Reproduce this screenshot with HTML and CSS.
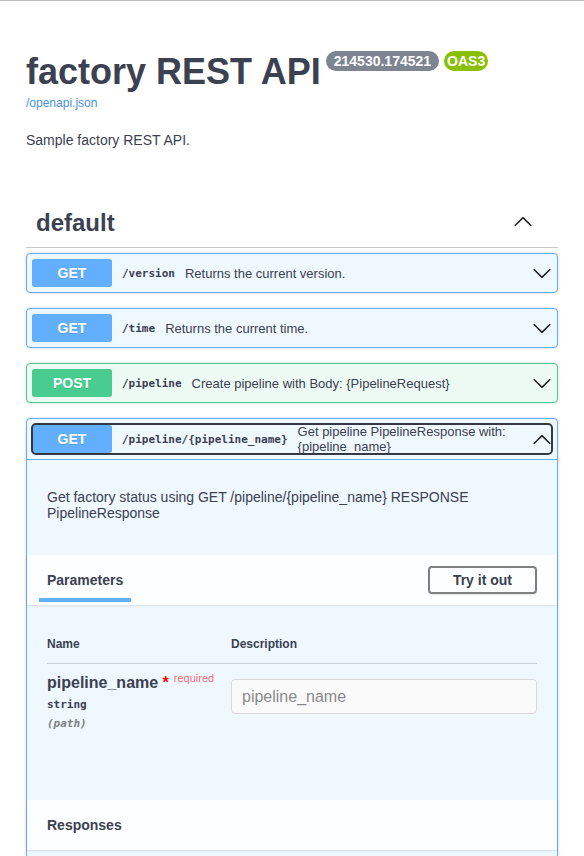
FILE: index.html
```html
<!DOCTYPE html>
<html lang="en">
<head>
<meta charset="utf-8">
<title>factory REST API</title>
<link rel="stylesheet" href="styles.css">
</head>
<body>
<div class="topline"></div>
<div class="wrapper">
  <section class="info">
    <h2 class="title"><span class="title-text">factory REST API</span><span class="badge badge-version">214530.174521</span><span class="badge badge-oas">OAS3</span></h2>
    <a class="spec-link" href="#">/openapi.json</a>
    <p class="info-desc">Sample factory REST API.</p>
  </section>

  <section class="tag-section">
    <div class="tag">
      <h3 class="tag-name">default</h3>
      <svg class="arrow tag-arrow" viewBox="0 0 20 20" width="20" height="20"><path d="M17.418 14.908c.272.268.709.268.979 0s.271-.701 0-.969l-7.908-7.83c-.27-.268-.707-.268-.979 0l-7.908 7.83c-.27.268-.27.701 0 .969.271.268.709.268.979 0L10 7.767l7.418 7.141z"/></svg>
    </div>

    <div class="opblock opblock-get">
      <div class="summary">
        <span class="method method-get">GET</span>
        <span class="path">/version</span>
        <span class="desc">Returns the current version.</span>
        <svg class="arrow" viewBox="0 0 20 20" width="20" height="20"><path d="M17.418 6.109c.272-.268.709-.268.979 0s.271.701 0 .969l-7.908 7.83c-.27.268-.707.268-.979 0l-7.908-7.830c-.27-.268-.27-.701 0-.969.271-.268.709-.268.979 0L10 13.25l7.418-7.141z"/></svg>
      </div>
    </div>

    <div class="opblock opblock-get">
      <div class="summary">
        <span class="method method-get">GET</span>
        <span class="path">/time</span>
        <span class="desc">Returns the current time.</span>
        <svg class="arrow" viewBox="0 0 20 20" width="20" height="20"><path d="M17.418 6.109c.272-.268.709-.268.979 0s.271.701 0 .969l-7.908 7.83c-.27.268-.707.268-.979 0l-7.908-7.83c-.27-.268-.27-.701 0-.969.271-.268.709-.268.979 0L10 13.25l7.418-7.141z"/></svg>
      </div>
    </div>

    <div class="opblock opblock-post">
      <div class="summary">
        <span class="method method-post">POST</span>
        <span class="path">/pipeline</span>
        <span class="desc">Create pipeline with Body: {PipelineRequest}</span>
        <svg class="arrow" viewBox="0 0 20 20" width="20" height="20"><path d="M17.418 6.109c.272-.268.709-.268.979 0s.271.701 0 .969l-7.908 7.83c-.27.268-.707.268-.979 0l-7.908-7.83c-.27-.268-.27-.701 0-.969.271-.268.709-.268.979 0L10 13.25l7.418-7.141z"/></svg>
      </div>
    </div>

    <div class="opblock opblock-get is-open">
      <div class="summary summary-open">
        <div class="summary-control">
          <span class="method method-get">GET</span>
          <span class="path">/pipeline/{pipeline_name}</span>
          <span class="desc desc-wrap">Get pipeline PipelineResponse with: {pipeline_name}</span>
          <svg class="arrow" viewBox="0 0 20 20" width="20" height="20"><path d="M17.418 14.908c.272.268.709.268.979 0s.271-.701 0-.969l-7.908-7.83c-.27-.268-.707-.268-.979 0l-7.908 7.83c-.27.268-.27.701 0 .969.271.268.709.268.979 0L10 7.767l7.418 7.141z"/></svg>
        </div>
      </div>
      <div class="opblock-body">
        <div class="op-desc"><p>Get factory status using GET /pipeline/{pipeline_name} RESPONSE PipelineResponse</p></div>

        <div class="section-header">
          <h4 class="tab-title">Parameters</h4>
          <button class="try-out" type="button">Try it out</button>
        </div>

        <div class="table-container">
          <div class="params-head">
            <span class="col-name">Name</span>
            <span class="col-desc">Description</span>
          </div>
          <div class="param-row">
            <div class="col-name">
              <div class="param-name">pipeline_name<span class="req-star">&nbsp;*</span><span class="req-label">required</span></div>
              <div class="param-type">string</div>
              <div class="param-in">(path)</div>
            </div>
            <div class="col-desc">
              <input class="param-input" type="text" placeholder="pipeline_name">
            </div>
          </div>
        </div>

        <div class="section-header">
          <h4 class="section-title">Responses</h4>
        </div>
        <div class="responses-body"></div>
      </div>
    </div>
  </section>
</div>
</body>
</html>
```

FILE: styles.css
```css
* { box-sizing: border-box; }

html {
  overflow: hidden;
}

html, body {
  margin: 0;
  padding: 0;
  background: #fff;
}

body {
  font-family: "Liberation Sans", Arial, sans-serif;
  color: #3b4151;
}

.topline {
  height: 1px;
  background: #bdbdbd;
}

.wrapper {
  padding: 0 26px;
}

/* ---------- info ---------- */
.info {
  padding-top: 50px;
}

.title {
  margin: 0;
  display: flex;
  align-items: flex-start;
  font-size: 36px;
  font-weight: 700;
  line-height: 42px;
  color: #3b4151;
}

.badge {
  margin-left: 5px;
  height: 20px;
  line-height: 20px;
  border-radius: 57px;
  color: #fff;
  font-size: 14px;
  font-weight: 700;
  padding: 0 8px;
}

.badge-version {
  background: #7d8492;
}

.badge-oas {
  background: #89bf04;
  padding: 0 3px;
}

.spec-link {
  display: block;
  margin-top: 3px;
  font-size: 12px;
  line-height: 14px;
  color: #4990e2;
  text-decoration: none;
}

.info-desc {
  margin: 22px 0 0;
  font-size: 14px;
  line-height: 16px;
}

/* ---------- tag ---------- */
.tag-section {
  margin-top: 50px;
}

.tag {
  display: flex;
  align-items: center;
  justify-content: space-between;
  padding: 10px 25px 10px 10px;
  border-bottom: 1px solid rgba(59, 65, 81, .3);
  margin-bottom: 5px;
}

.tag-name {
  margin: 0;
  font-size: 24px;
  font-weight: 700;
  line-height: 29px;
}

.arrow {
  flex: none;
  width: 20px;
  height: 20px;
  fill: #1a1a1a;
}

.tag-arrow {
  margin-top: -4px;
}

/* ---------- operation blocks ---------- */
.opblock {
  border: 1px solid #61affe;
  background: #eff7ff;
  border-radius: 4px;
  margin-bottom: 15px;
  box-shadow: 0 0 3px rgba(0, 0, 0, .19);
}

.opblock-post {
  border-color: #49cc90;
  background: #edfaf4;
}

.summary {
  display: flex;
  align-items: center;
  padding: 5px;
}

.summary-open {
  border-bottom: 1px solid #61affe;
}

.summary-control {
  flex: 1;
  display: flex;
  align-items: center;
  border-radius: 4px;
  outline: 2px solid #343846;
  outline-offset: -1px;
}

.method {
  flex: none;
  width: 80px;
  padding: 6px 0;
  line-height: 16px;
  font-size: 14px;
  font-weight: 700;
  color: #fff;
  text-align: center;
  border-radius: 3px;
  text-shadow: 0 1px 0 rgba(0, 0, 0, .1);
}

.method-get { background: #61affe; }
.method-post { background: #49cc90; }

.path {
  flex: none;
  padding: 0 10px;
  font-family: "DejaVu Sans Mono", "Liberation Mono", monospace;
  font-size: 11px;
  font-weight: 700;
  color: #3b4151;
}

.desc {
  flex: 1;
  font-size: 13px;
  color: #3b4151;
}

.desc-wrap {
  line-height: 15px;
}

/* ---------- open block body ---------- */
.op-desc {
  padding: 29px 20px 34px;
  font-size: 14px;
  line-height: 16px;
}

.op-desc p {
  margin: 0;
}

.section-header {
  display: flex;
  align-items: center;
  justify-content: space-between;
  height: 50px;
  padding: 8px 20px;
  background: rgba(255, 255, 255, .8);
  box-shadow: 0 1px 2px rgba(0, 0, 0, .1);
}

.tab-title,
.section-title {
  margin: 0;
  font-size: 14px;
  line-height: 16px;
  font-weight: 700;
  color: #3b4151;
}

.tab-title {
  position: relative;
}

.tab-title::after {
  content: "";
  position: absolute;
  left: -10%;
  width: 120%;
  bottom: -14px;
  height: 4px;
  background: #61affe;
}

.try-out {
  height: 28px;
  font-family: "Liberation Sans", Arial, sans-serif;
  font-size: 14px;
  font-weight: 700;
  line-height: 16px;
  padding: 4px 23px;
  border: 2px solid #808080;
  border-radius: 4px;
  background: transparent;
  color: #3b4151;
  box-shadow: 0 1px 2px rgba(0, 0, 0, .1);
}

.table-container {
  padding: 20px;
  min-height: 195px;
}

.params-head {
  display: flex;
  padding: 12px 0;
  border-bottom: 1px solid rgba(59, 65, 81, .2);
  font-size: 12px;
  font-weight: 700;
  line-height: 14px;
}

.col-name {
  flex: none;
  width: 184px;
}

.col-desc {
  flex: 1;
}

.param-row {
  display: flex;
  padding-top: 10px;
}

.param-name {
  font-size: 16px;
  font-weight: 700;
  line-height: 18px;
}

.req-star {
  color: red;
}

.req-label {
  padding: 0 5px;
  font-size: 11px;
  font-weight: 400;
  line-height: 0;
  color: rgba(255, 0, 0, .6);
  vertical-align: 6px;
}

.param-type {
  padding: 6px 0 5px;
  font-family: "DejaVu Sans Mono", "Liberation Mono", monospace;
  font-size: 11px;
  font-weight: 700;
  line-height: 14px;
}

.param-in {
  font-family: "DejaVu Sans Mono", "Liberation Mono", monospace;
  font-size: 11px;
  font-weight: 700;
  font-style: italic;
  line-height: 14px;
  color: #808080;
}

.param-input {
  display: block;
  width: 100%;
  margin: 5px 0 0;
  padding: 8px 10px;
  font-family: "Liberation Sans", Arial, sans-serif;
  font-size: 16px;
  line-height: 17px;
  height: 35px;
  border: 1px solid #d9d9d9;
  border-radius: 4px;
  background: #fafafa;
  color: #3b4151;
}

.param-input::placeholder {
  color: #8a8a8a;
}

.responses-body {
  height: 60px;
}
```
